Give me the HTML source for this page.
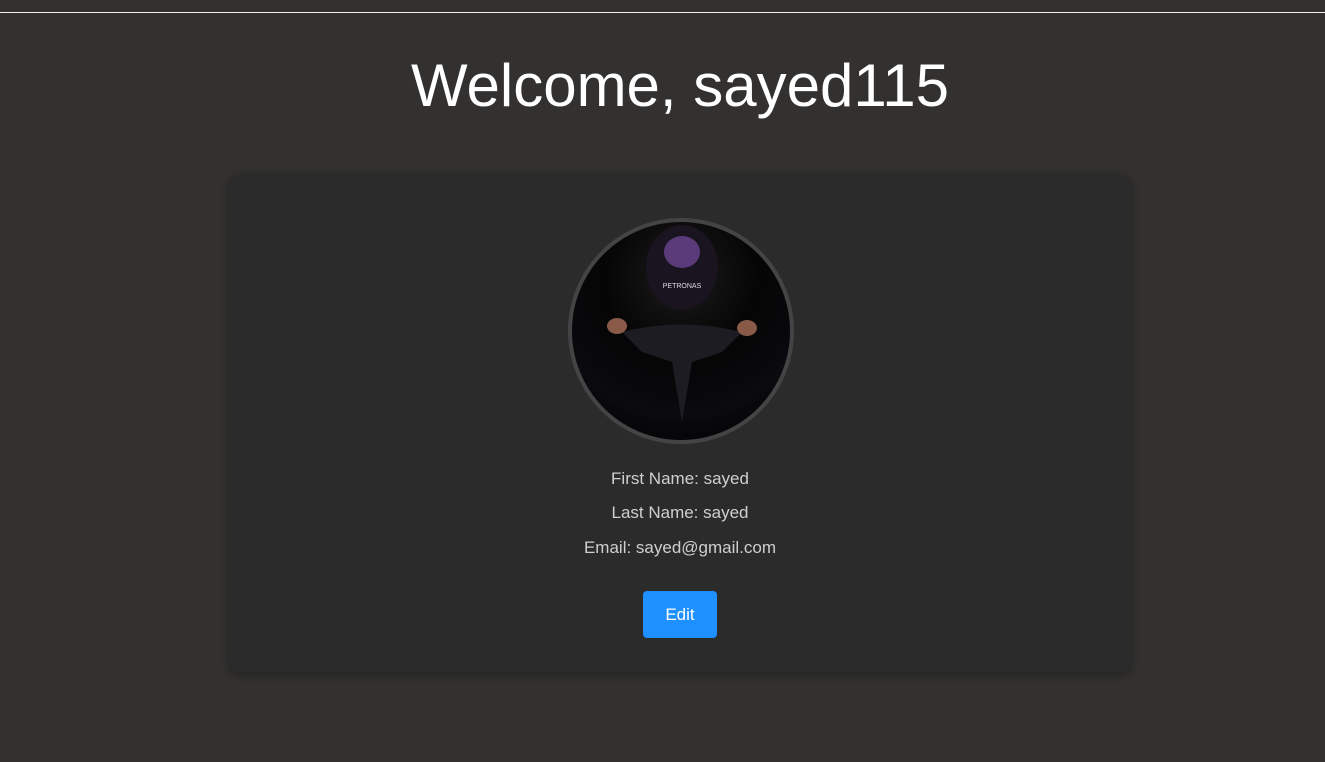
<!DOCTYPE html>
<html><head><style>
body{margin:0;background:#32312f;width:1325px;height:762px;overflow:hidden;font-family:"Liberation Sans",sans-serif;position:relative}
.line{position:absolute;top:12px;left:0;width:1325px;height:1px;background:#eee}
h1{position:absolute;top:53px;left:0;width:1360px;text-align:center;margin:0;font-weight:normal;font-size:60px;color:#fff;line-height:66px}
.card{position:absolute;left:230px;top:175px;width:900px;height:497px;background:#2b2b2b;border-radius:8px;box-shadow:0 2px 10px rgba(0,0,0,.35)}
.av{position:absolute;left:338px;top:43px;width:218px;height:218px;border:4px solid #444;border-radius:50%;background:radial-gradient(circle at 50% 25%,#3a2a45 0,#111 18%,#050505 40%,#0a0a0f 70%,#000 100%);overflow:hidden}
.t{position:absolute;left:0;width:900px;text-align:center;color:#cfcfcf;font-size:17px}
.btn{position:absolute;left:413px;top:416px;width:74px;height:47px;background:#1e90ff;border-radius:4px;color:#fff;font-size:17px;line-height:47px;text-align:center}
</style></head><body>
<div class="line"></div>
<h1>Welcome, sayed115</h1>
<div class="card">
<div class="av">
<svg width="218" height="218" viewBox="0 0 218 218">
<ellipse cx="110" cy="45" rx="36" ry="42" fill="#1a1420"/>
<ellipse cx="110" cy="30" rx="18" ry="16" fill="#5a3a78"/>
<text x="110" y="66" font-size="7" fill="#ddd" text-anchor="middle" font-family="Liberation Sans">PETRONAS</text>
<path d="M50 110 Q110 95 170 110 L150 130 L120 140 L110 200 L100 140 L70 130Z" fill="#1c1c22"/>
<ellipse cx="45" cy="104" rx="10" ry="8" fill="#8a5a48"/>
<ellipse cx="175" cy="106" rx="10" ry="8" fill="#8a5a48"/>
</svg>
</div>
<div class="t" style="top:294px">First Name: sayed</div>
<div class="t" style="top:328px">Last Name: sayed</div>
<div class="t" style="top:363px">Email: sayed@gmail.com</div>
<div class="btn">Edit</div>
</div>
</body></html>
